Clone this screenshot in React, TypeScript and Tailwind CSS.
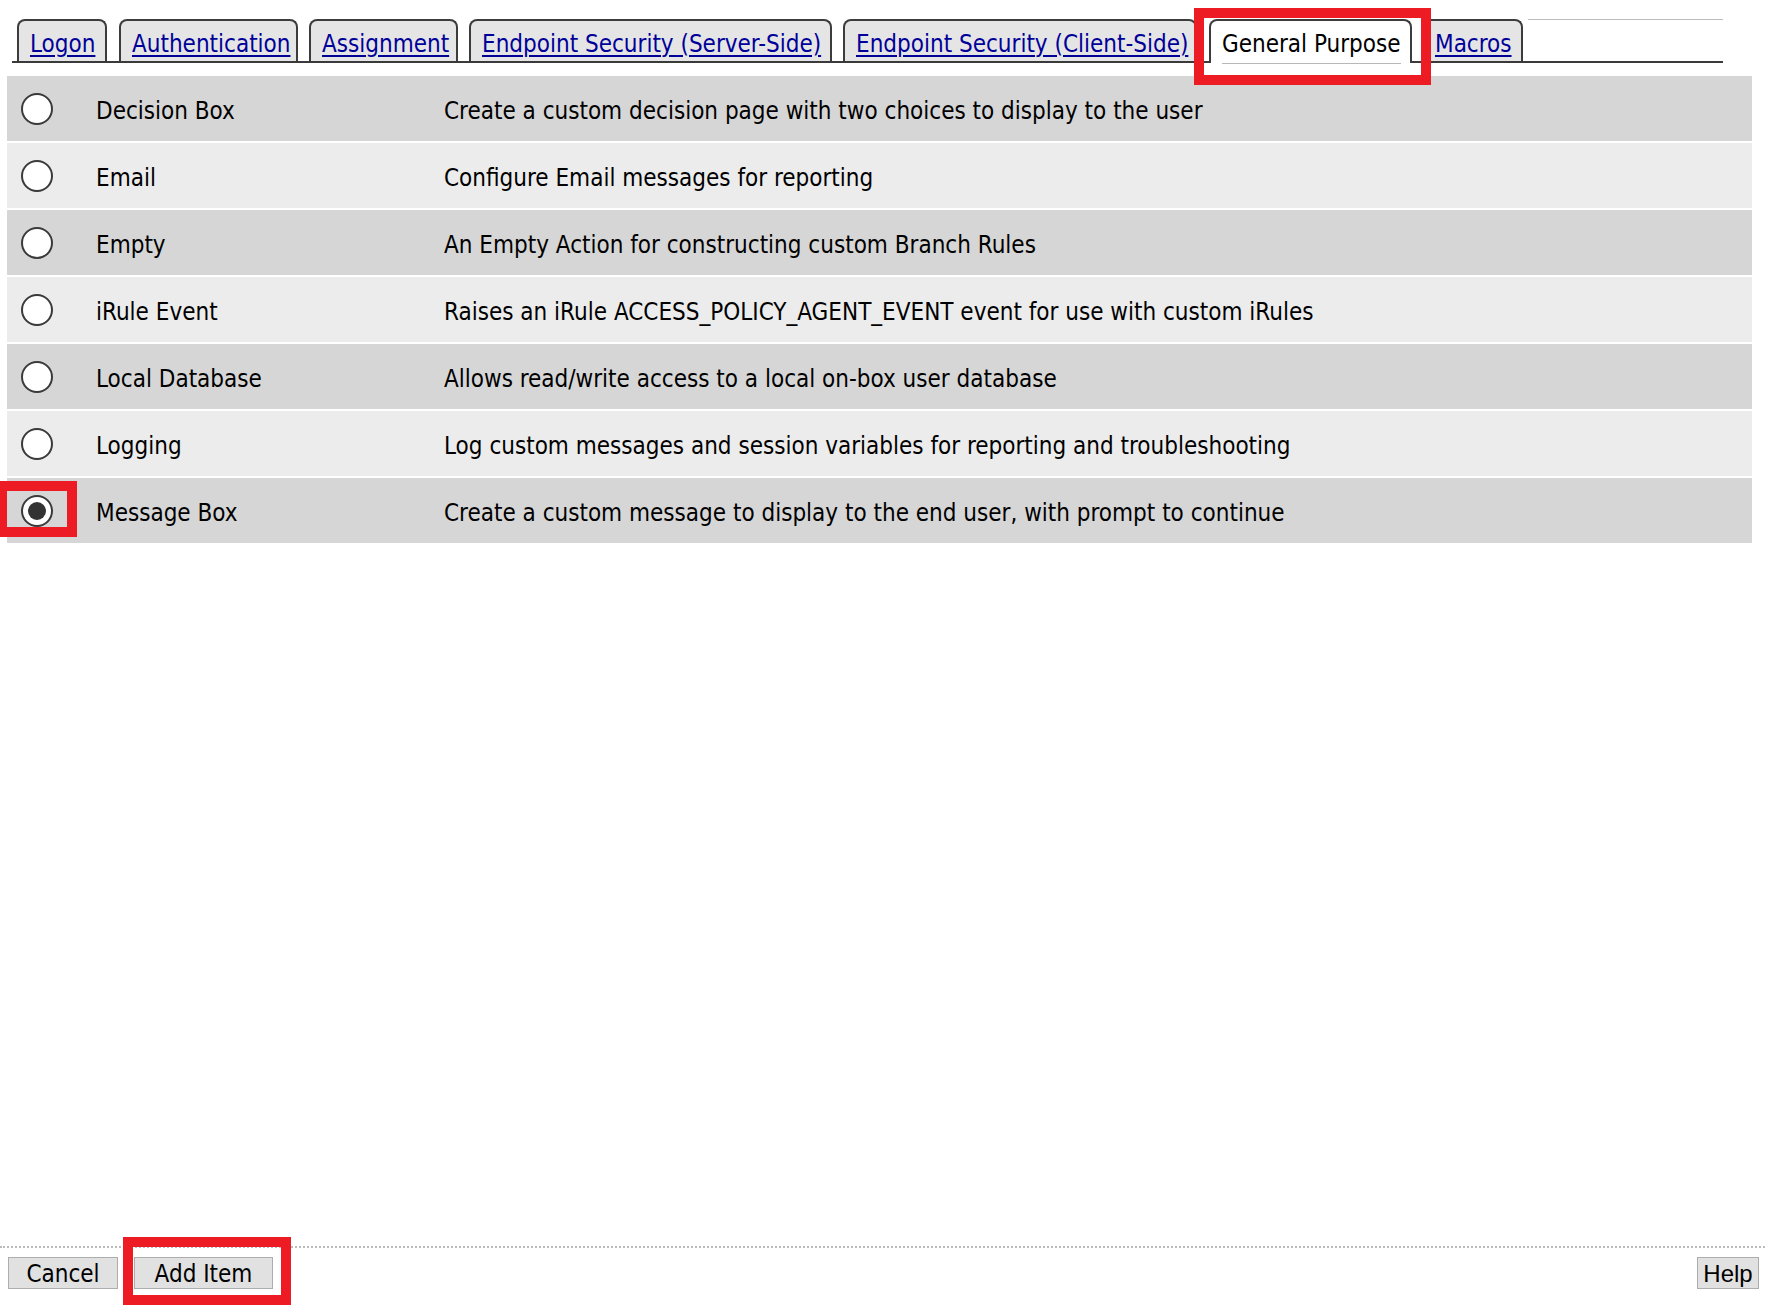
import React from "react";

const tabs = [
  { label: "Logon", ml: "ml-[5px]", w: "w-[90px]" },
  { label: "Authentication", ml: "ml-[12px]", w: "w-[179px]" },
  { label: "Assignment", ml: "ml-[11px]", w: "w-[149px]" },
  { label: "Endpoint Security (Server-Side)", ml: "ml-[11px]", w: "w-[363px]" },
  { label: "Endpoint Security (Client-Side)", ml: "ml-[11px]", w: "w-[354px]" },
  { label: "General Purpose", ml: "ml-[12px]", w: "w-[203px]", active: true },
  { label: "Macros", ml: "ml-[10px]", w: "w-[101px]" },
];

const rows = [
  ["Decision Box", "Create a custom decision page with two choices to display to the user"],
  ["Email", "Configure Email messages for reporting"],
  ["Empty", "An Empty Action for constructing custom Branch Rules"],
  ["iRule Event", "Raises an iRule ACCESS_POLICY_AGENT_EVENT event for use with custom iRules"],
  ["Local Database", "Allows read/write access to a local on-box user database"],
  ["Logging", "Log custom messages and session variables for reporting and troubleshooting"],
  ["Message Box", "Create a custom message to display to the end user, with prompt to continue"],
];

export default function App() {
  return (
    <div className="relative flex h-[1310px] w-[1773px] flex-col overflow-hidden bg-white font-['DejaVu_Sans_Condensed','DejaVu_Sans',sans-serif] text-[24px] leading-none text-black">
      {/* Tab bar */}
      <div className="ml-[12px] mt-[19px] flex w-[1711px] items-stretch border-b-2 border-[#3a3a3a]">
        {tabs.map((t) => (
          <div
            key={t.label}
            className={`relative ${t.ml} ${t.w} h-[42px] ${
              t.active ? "z-10 -mb-[2px] h-[44px] bg-white" : "bg-[#e5e5e5]"
            } flex items-center whitespace-nowrap rounded-t-[8px] border-2 border-b-0 border-[#3c3c3c] pl-[11px] ${
              t.active ? "pt-[3px]" : "pt-[5px]"
            }`}
          >
            {t.active ? (
              <span className="relative text-black">
                {t.label}
                <span className="absolute left-0 right-0 top-[31px] h-px bg-[#b8b8b8]" />
              </span>
            ) : (
              <span className="text-[#000099] underline decoration-[2px] underline-offset-[3px]">{t.label}</span>
            )}
            {t.active && (
              <div className="pointer-events-none absolute -left-[17px] -right-[21px] -top-[13px] h-[77px] border-[10px] border-[#ed1c24]" />
            )}
          </div>
        ))}
        <div className="ml-[5px] flex-1 self-start border-t border-[#bbbbbb]" />
      </div>

      {/* Rows */}
      <div className="ml-[7px] mt-[13px] flex w-[1745px] flex-col gap-[2px]">
        {rows.map(([name, desc], i) => {
          const selected = i === rows.length - 1;
          return (
            <div
              key={name}
              className={`relative flex h-[65px] items-center ${i % 2 === 0 ? "bg-[#d6d6d6]" : "bg-[#ececec]"}`}
            >
              <div className="ml-[14px] flex h-[32px] w-[32px] shrink-0 items-center justify-center rounded-full border-2 border-[#3a3a3a] bg-white">
                {selected && <div className="h-[18px] w-[18px] rounded-full bg-[#333333]" />}
              </div>
              <span className="ml-[43px] w-[348px] shrink-0 whitespace-nowrap pt-[4px]">{name}</span>
              <span className="whitespace-nowrap pt-[4px]">{desc}</span>
              {selected && (
                <div className="pointer-events-none absolute -left-[10px] top-[3px] h-[56px] w-[80px] border-[10px] border-[#ed1c24]" />
              )}
            </div>
          );
        })}
      </div>

      <div className="flex-1" />

      {/* Footer */}
      <div className="mr-[8px] border-t-2 border-dotted border-[#bbbbbb]" />
      <div className="flex items-center pb-[21px] pt-[9px]">
        <button className="ml-[8px] flex h-[32px] w-[110px] items-center justify-center border border-[#adadad] bg-[#e1e1e1] pt-[2px] text-black">
          Cancel
        </button>
        <div className="relative ml-[16px]">
          <button className="flex h-[32px] w-[139px] items-center justify-center border border-[#adadad] bg-[#e1e1e1] pt-[2px] text-black">
            Add Item
          </button>
          <div className="pointer-events-none absolute -bottom-[16px] -left-[11px] -right-[18px] -top-[20px] border-[10px] border-[#ed1c24]" />
        </div>
        <button className="ml-auto mr-[14px] flex h-[32px] w-[62px] items-center justify-center border border-[#adadad] bg-[#e1e1e1] pt-[2px] font-['Liberation_Sans',sans-serif] text-black">
          Help
        </button>
      </div>
    </div>
  );
}
